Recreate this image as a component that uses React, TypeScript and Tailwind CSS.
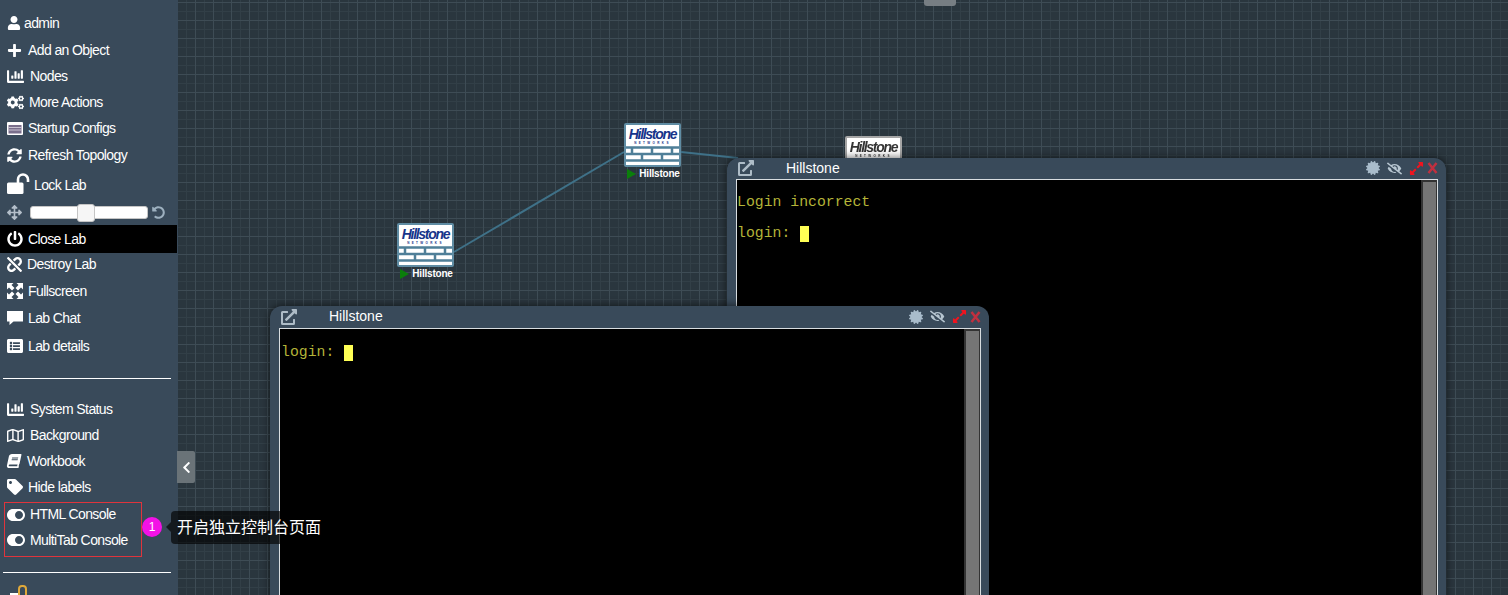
import type { ReactNode } from "react";
import {
  FaBook,
  FaCertificate,
  FaChartBar,
  FaChevronLeft,
  FaCogs,
  FaExpandAlt,
  FaExternalLinkAlt,
  FaEyeSlash,
  FaListAlt,
  FaPlus,
  FaPowerOff,
  FaRegMap,
  FaSyncAlt,
  FaTag,
  FaToggleOn,
  FaUndoAlt,
  FaUnlink,
  FaUser,
  FaArrowsAlt,
} from "react-icons/fa";

type MenuItem = {
  label: string;
  icon: ReactNode;
  row: string;
  box: string;
};

function StartupIcon() {
  return (
    <svg width="16" height="13" viewBox="0 0 16 13">
      <rect x="0" y="0" width="16" height="13" rx="1" fill="#fff" />
      <rect x="1.500" y="3" width="13" height="8.500" fill="#7a6f8c" />
      <path d="M1.500 5.500h13M1.500 8h13" stroke="#c9c3d2" strokeWidth="1" />
    </svg>
  );
}

function LockOpenIcon() {
  return (
    <svg width="23" height="21" viewBox="0 0 23 21">
      <path d="M11 10V6.500a5 5 0 0 1 10 0V9" fill="none" stroke="#fff" strokeWidth="2.600" />
      <rect x="0" y="9.500" width="16.500" height="11.500" rx="1.500" fill="#fff" />
    </svg>
  );
}

function CornerArrowsIcon() {
  const arrow = "M0 0h6.500L4.500 2 7.500 5 5 7.500 2 4.500 0 6.500z";
  return (
    <svg width="16" height="16" viewBox="0 0 16 16" fill="#fff">
      <path d={arrow} />
      <path d={arrow} transform="translate(16 0) scale(-1 1)" />
      <path d={arrow} transform="translate(0 16) scale(1 -1)" />
      <path d={arrow} transform="translate(16 16) scale(-1 -1)" />
    </svg>
  );
}

function ChatIcon() {
  return (
    <svg width="16" height="14" viewBox="0 0 16 14" fill="#fff">
      <path d="M0 0h16v10.500H6.500L2.500 14v-3.500H0z" />
    </svg>
  );
}

const topMenu: MenuItem[] = [
  { label: "admin", icon: <FaUser size={14} />, row: "h-[28px]", box: "w-[17px]" },
  { label: "Add an Object", icon: <FaPlus size={15} />, row: "h-[26px]", box: "w-[21px]" },
  { label: "Nodes", icon: <FaChartBar size={17} />, row: "h-[26px]", box: "w-[23px]" },
  { label: "More Actions", icon: <FaCogs size={17} />, row: "h-[26px]", box: "w-[22px]" },
  { label: "Startup Configs", icon: <StartupIcon />, row: "h-[26px]", box: "w-[21px]" },
  { label: "Refresh Topology", icon: <FaSyncAlt size={15} />, row: "h-[28px]", box: "w-[21px]" },
  { label: "Lock Lab", icon: <LockOpenIcon />, row: "h-[30px] pt-[2px]", box: "-mt-[3px] w-[27px]" },
];

const labMenu: MenuItem[] = [
  { label: "Destroy Lab", icon: <FaUnlink size={15} />, row: "h-[23px]", box: "w-[20px]" },
  { label: "Fullscreen", icon: <CornerArrowsIcon />, row: "h-[30px]", box: "w-[21px]" },
  { label: "Lab Chat", icon: <ChatIcon />, row: "h-[24px]", box: "w-[21px]" },
  { label: "Lab details", icon: <FaListAlt size={16} />, row: "h-[32px]", box: "w-[21px]" },
];

const statusMenu: MenuItem[] = [
  { label: "System Status", icon: <FaChartBar size={17} />, row: "h-[26px]", box: "w-[23px]" },
  { label: "Background", icon: <FaRegMap size={17} />, row: "h-[26px]", box: "w-[23px]" },
  { label: "Workbook", icon: <FaBook size={14} className="-skew-x-12" />, row: "h-[26px]", box: "w-[20px]" },
  { label: "Hide labels", icon: <FaTag size={16} />, row: "h-[26px]", box: "w-[21px]" },
];

const consoleMenu: MenuItem[] = [
  { label: "HTML Console", icon: <FaToggleOn size={18} />, row: "h-[23px]", box: "w-[23px]" },
  { label: "MultiTab Console", icon: <FaToggleOn size={18} />, row: "h-[28px]", box: "w-[23px]" },
];

function MenuRow({ item }: { item: MenuItem }) {
  return (
    <div className={`flex shrink-0 items-center pl-[7px] text-white ${item.row}`}>
      <span className={`flex shrink-0 items-center ${item.box}`}>{item.icon}</span>
      <span>{item.label}</span>
    </div>
  );
}

function Sidebar() {
  return (
    <aside className="flex h-full w-[178px] shrink-0 flex-col overflow-hidden bg-[#394a5a] pt-[9px] text-[14px] tracking-[-0.6px]">
      {topMenu.map((item) => (
        <MenuRow key={item.label} item={item} />
      ))}

      {/* Zoom slider */}
      <div className="flex h-[26px] shrink-0 items-center pl-[7px]">
        <FaArrowsAlt size={15} className="text-[#b4bfca]" />
        <div className="relative ml-[8px] h-[13px] w-[118px] rounded-[3px] border border-[#c5c5c5] bg-white">
          <div className="absolute left-[46px] top-[-3px] h-[18px] w-[18px] rounded-[3px] border border-[#c5c5c5] bg-[#f6f6f6]" />
        </div>
        <FaUndoAlt size={13} className="ml-[4px] text-[#9db0bf]" />
      </div>

      <div className="mr-[1px] flex h-[28px] shrink-0 items-center bg-black pl-[7px] text-white">
        <span className="flex w-[21px] shrink-0 items-center">
          <FaPowerOff size={16} />
        </span>
        <span>Close Lab</span>
      </div>

      {labMenu.map((item) => (
        <MenuRow key={item.label} item={item} />
      ))}

      <div className="ml-[3px] mt-[16px] h-px w-[168px] shrink-0 bg-white" />

      <div className="mt-[17px] shrink-0">
        {statusMenu.map((item) => (
          <MenuRow key={item.label} item={item} />
        ))}
      </div>

      {/* Annotated toggles */}
      <div className="ml-[4px] mt-[2px] h-[55px] w-[138px] shrink-0 border border-[#e0343c] [&>div]:pl-[2px]">
        {consoleMenu.map((item) => (
          <MenuRow key={item.label} item={item} />
        ))}
      </div>

      <div className="ml-[3px] mt-[15px] h-px w-[168px] shrink-0 bg-white" />

      <div className="ml-[10px] mt-[12px] flex shrink-0 items-start">
        <span className="mt-[8px] h-[3px] w-[8px] bg-white" />
        <span className="h-[16px] w-[9px] rounded-t-[4px] border-2 border-[#e0a93a]" />
      </div>
    </aside>
  );
}

function Node({ className, grey, label }: { className: string; grey?: boolean; label: boolean }) {
  return (
    <div className={`absolute w-[57px] ${className}`}>
      <div
        className={`flex h-[44px] flex-col items-center overflow-hidden rounded-[2px] border-2 bg-white ${
          grey ? "border-[#a5a5a5] grayscale" : "border-[#5f8ca3]"
        }`}
      >
        <span className="mt-[2px] text-[14px] font-bold italic leading-[14px] tracking-[-1.3px] text-[#17348a]">
          Hillstone
        </span>
        <span className="h-[4px] text-[3px] font-bold leading-[4px] tracking-[2.4px] text-[#17348a]">
          NETWORKS
        </span>
        <svg width="53" height="20" viewBox="0 0 53 20" className="shrink-0">
          <path
            d="M0 2.500h53M0 9h53M0 15.500h53M6 2.500v6.500M26 2.500v6.500M46 2.500v6.500M16 9v6.500M36 9v6.500"
            stroke="#4f7f98"
            strokeWidth="2.500"
            fill="none"
          />
        </svg>
      </div>
      {label && (
        <div className="flex items-center justify-center pl-[2px] pt-[1px]">
          <svg width="9" height="10" viewBox="0 0 9 10" className="mr-[3px]">
            <path d="M0 0l9 5-9 5z" fill="#0b7f0b" />
          </svg>
          <span className="text-[10px] font-bold leading-[12px] tracking-[-0.2px] text-white">
            Hillstone
          </span>
        </div>
      )}
    </div>
  );
}

function ConsoleWindow({
  className,
  head,
  body,
  lines,
}: {
  className: string;
  head: string;
  body: string;
  lines: string[];
}) {
  return (
    <div
      className={`absolute w-[719px] rounded-t-[12px] bg-[#394a5a] pl-[9px] pr-[8px] shadow-[0_0_8px_rgba(0,0,0,0.65)] ${className}`}
    >
      <div className={`flex items-center pb-[1px] ${head}`}>
        <FaExternalLinkAlt size={16} className="ml-[2px] text-[#aebcc7]" />
        <span className="ml-[32px] text-[14px] text-white">Hillstone</span>
        <div className="ml-auto flex items-center">
          <FaCertificate size={14} className="text-[#a9bccb]" />
          <FaEyeSlash size={15} className="ml-[7px] text-[#b7c6d1]" />
          <FaExpandAlt size={15} className="ml-[7px] text-[#f0141e]" />
          <svg width="11" height="12" viewBox="0 0 11 12" className="ml-[3px]">
            <path d="M1.500 1l8 10M9.500 1l-8 10" stroke="#c0303f" strokeWidth="2.500" />
          </svg>
        </div>
      </div>
      <div className="flex h-[460px] border border-[#d8dde0] bg-black">
        <div className={`flex-1 whitespace-pre font-['Liberation_Mono',monospace] text-[14.8px] leading-[31px] text-[#b4b438] ${body}`}>
          {lines.map((line) => (
            <div key={line} className="flex h-[31px] items-center">
              <span>{line}</span>
              {line.startsWith("login") && <span className="ml-[1px] h-[16px] w-[9px] bg-[#ffff55]" />}
            </div>
          ))}
        </div>
        <div className="w-[16px] shrink-0 bg-[#333] pl-[2px] pr-[1px] pt-[2px]">
          <div className="h-full w-[13px] bg-[#757575]" />
        </div>
      </div>
    </div>
  );
}

export default function App() {
  return (
    <div className="relative flex h-[595px] w-[1508px] overflow-hidden font-['Liberation_Sans',sans-serif]">
      <Sidebar />

      {/* Topology canvas */}
      <main className="relative flex-1 bg-[#2a363e] [background-image:linear-gradient(#3e4c55_1px,transparent_1px),linear-gradient(90deg,#3e4c55_1px,transparent_1px),linear-gradient(#323f47_1px,transparent_1px),linear-gradient(90deg,#323f47_1px,transparent_1px)] [background-position:17px_2px,17px_2px,17px_2px,17px_2px] [background-size:18px_18px,18px_18px,9px_9px,9px_9px]">
        <div className="absolute left-[746px] top-0 h-[6px] w-[32px] rounded-b-[3px] bg-[#777e83]" />

        <svg className="absolute inset-0 h-full w-full">
          <line x1="276" y1="252" x2="446" y2="152" stroke="#3f7188" strokeWidth="2" />
          <line x1="503" y1="152" x2="560" y2="158" stroke="#3f7188" strokeWidth="2" />
        </svg>

        <Node className="left-[219px] top-[223px]" label />
        <Node className="left-[446px] top-[123px]" label />
        <Node className="left-[667px] top-[136px]" grey label={false} />

        <ConsoleWindow
          className="left-[549px] top-[158px]"
          head="h-[21px]"
          body="pt-[7px]"
          lines={["Login incorrect", "login: "]}
        />
        <ConsoleWindow
          className="left-[92px] top-[306px]"
          head="h-[22px]"
          body="pl-[1px] pt-[8px]"
          lines={["login: "]}
        />

        {/* Sidebar collapse handle */}
        <button className="absolute left-[-1px] top-[451px] flex h-[32px] w-[18px] items-center justify-center rounded-r-[2px] bg-[#6a7378] text-white">
          <FaChevronLeft size={13} />
        </button>
      </main>

      {/* Annotation over the page */}
      <span className="absolute left-[142px] top-[517px] flex h-[20px] w-[20px] items-center justify-center rounded-full bg-[#f312e6] text-[12px] text-white">
        1
      </span>
      <div className="absolute left-[171px] top-[511px] flex h-[33px] w-[157px] items-center rounded-[4px] bg-black/65 pb-[3px] pl-[6px] font-['Noto_Sans_CJK_SC',sans-serif] text-[16px] text-white">
        <span className="absolute left-[-5px] top-[11px] h-0 w-0 border-y-[5px] border-r-[5px] border-y-transparent border-r-black/65" />
        开启独立控制台页面
      </div>
    </div>
  );
}
